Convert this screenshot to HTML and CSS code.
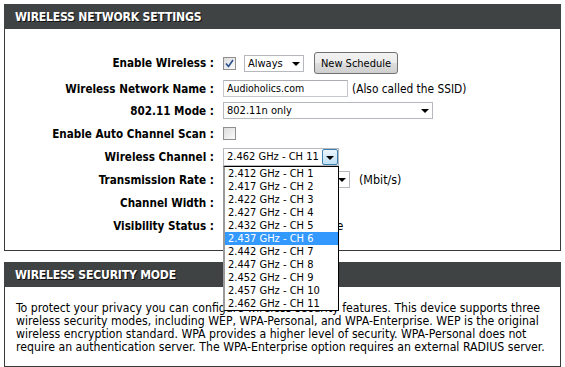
FILE: index.html
```html
<!DOCTYPE html>
<html lang="en">
<head>
    <meta charset="UTF-8">
    <title>Wireless Settings</title>
    <link rel="stylesheet" href="styles.css">
</head>
<body>
    <div class="page">
        <div class="box">
            <h2 class="box-title">WIRELESS NETWORK SETTINGS</h2>
            <div class="box-body settings">
                <div class="row row-first">
                    <span class="lbl">Enable Wireless :</span>
                    <div class="field">
                        <span class="check checked">
                            <svg width="9" height="9" viewBox="0 0 9 9"><path d="M1 4.5 L3.5 7.5 L8 1" fill="none" stroke="#2a4f8f" stroke-width="1.6"/></svg>
                        </span>
                        <div class="select sel-always"><span class="sel-text">Always</span><span class="arrow"></span></div>
                        <button class="btn">New Schedule</button>
                    </div>
                </div>
                <div class="row row-second">
                    <span class="lbl">Wireless Network Name :</span>
                    <div class="field">
                        <div class="input ssid">Audioholics.com</div>
                        <span class="note">(Also called the SSID)</span>
                    </div>
                </div>
                <div class="row">
                    <span class="lbl">802.11 Mode :</span>
                    <div class="field">
                        <div class="select sel-mode"><span class="sel-text">802.11n only</span><span class="arrow"></span></div>
                    </div>
                </div>
                <div class="row">
                    <span class="lbl">Enable Auto Channel Scan :</span>
                    <div class="field">
                        <span class="check"></span>
                    </div>
                </div>
                <div class="row">
                    <span class="lbl">Wireless Channel :</span>
                    <div class="field">
                        <div class="channel">
                            <div class="select sel-channel"><span class="sel-text">2.462 GHz - CH 11</span><span class="arrow"></span></div>
                            <ul class="dropdown">
                                <li>2.412 GHz - CH 1</li>
                                <li>2.417 GHz - CH 2</li>
                                <li>2.422 GHz - CH 3</li>
                                <li>2.427 GHz - CH 4</li>
                                <li>2.432 GHz - CH 5</li>
                                <li class="active">2.437 GHz - CH 6</li>
                                <li>2.442 GHz - CH 7</li>
                                <li>2.447 GHz - CH 8</li>
                                <li>2.452 GHz - CH 9</li>
                                <li>2.457 GHz - CH 10</li>
                                <li>2.462 GHz - CH 11</li>
                            </ul>
                        </div>
                    </div>
                </div>
                <div class="row">
                    <span class="lbl">Transmission Rate :</span>
                    <div class="field">
                        <div class="select sel-rate"><span class="sel-text">Best (automatic)</span><span class="arrow"></span></div>
                        <span class="note note-rate">(Mbit/s)</span>
                    </div>
                </div>
                <div class="row">
                    <span class="lbl">Channel Width :</span>
                    <div class="field">
                        <div class="select sel-width"><span class="sel-text">20 MHz</span><span class="arrow"></span></div>
                    </div>
                </div>
                <div class="row">
                    <span class="lbl">Visibility Status :</span>
                    <div class="field">
                        <span class="radio on"></span><span class="opt">Visible</span>
                        <span class="radio"></span><span class="opt">Invisible</span>
                    </div>
                </div>
            </div>
        </div>

        <div class="box">
            <h2 class="box-title">WIRELESS SECURITY MODE</h2>
            <div class="box-body">
                <p class="desc">To protect your privacy you can configure wireless security features. This device supports three<br>
                wireless security modes, including WEP, WPA-Personal, and WPA-Enterprise. WEP is the original<br>
                wireless encryption standard. WPA provides a higher level of security. WPA-Personal does not<br>
                require an authentication server. The WPA-Enterprise option requires an external RADIUS server.</p>
            </div>
        </div>
    </div>
</body>
</html>
```

FILE: styles.css
```css
:root {
    --head-bg: #404343;
    --border: #3a3a3a;
    --ctrl-border: #b5b8bd;
    --text: #000;
}

* {
    margin: 0;
    padding: 0;
    box-sizing: border-box;
}

body {
    font-family: 'DejaVu Sans Condensed', 'DejaVu Sans', sans-serif;
    font-size: 12px;
    color: var(--text);
    background: #fff;
}

.page {
    padding: 4px 4px 0 4px;
}

.box {
    border: 1px solid var(--border);
    border-top: none;
    margin-bottom: 11px;
}

.box-title {
    background: var(--head-bg);
    color: #fff;
    font-family: 'DejaVu Sans Condensed', 'DejaVu Sans', sans-serif;
    font-size: 12.1px;
    font-weight: 700;
    letter-spacing: -0.2px;
    height: 25px;
    line-height: 26px;
    padding-left: 11px;
    margin: 0 -1px;
    text-shadow: 1px 1px 0 #111;
}

/* settings rows */
.settings {
    padding: 20px 0 13px 0;
}

.row {
    display: flex;
    align-items: center;
    height: 23px;
}

.row-first {
    height: 28px;
}

.row-second {
    height: 21px;
    margin-top: 1px;
}

.lbl {
    width: 209px;
    text-align: right;
    font-weight: 700;
    font-size: 11.6px;
    white-space: nowrap;
}

.field {
    display: flex;
    align-items: center;
    margin-left: 9px;
    white-space: nowrap;
    font-size: 11px;
}

.check {
    display: inline-flex;
    align-items: center;
    justify-content: center;
    width: 13px;
    height: 13px;
    border: 1px solid #8f8f8f;
    background: linear-gradient(135deg, #dcdcdc, #fbfbfb);
}

.check svg {
    display: block;
}

.select {
    display: flex;
    align-items: center;
    height: 17px;
    border: 1px solid var(--ctrl-border);
    background: #fff;
}

.sel-text {
    flex: 1;
    padding-left: 3px;
    font-size: 11px;
    line-height: 15px;
}

.arrow {
    width: 15px;
    height: 15px;
    position: relative;
}

.arrow::after {
    content: '';
    position: absolute;
    left: 4px;
    top: 6px;
    border-left: 4px solid transparent;
    border-right: 4px solid transparent;
    border-top: 4px solid #000;
}

.sel-always {
    width: 60px;
    margin-left: 8px;
}

.btn {
    margin-left: 10px;
    width: 84px;
    height: 22px;
    border: 1px solid #707070;
    border-radius: 3px;
    background: linear-gradient(#f2f2f2, #ebebeb 50%, #dddddd 50%, #cfcfcf);
    font-family: 'DejaVu Sans Condensed', 'DejaVu Sans', sans-serif;
    font-size: 11px;
    color: #000;
}

.input {
    height: 17px;
    border: 1px solid #c5c8cc;
    border-top-color: #abadb3;
    padding-left: 3px;
    line-height: 15px;
    font-size: 10.5px;
}

.ssid {
    width: 125px;
}

.note {
    margin-left: 4px;
    font-size: 11.8px;
}

.note-rate {
    margin-left: 9px;
    font-size: 12.4px;
}

.sel-mode {
    width: 210px;
}

.channel {
    position: relative;
}

.sel-channel {
    width: 116px;
    height: 18px;
}

.sel-channel .arrow {
    width: 16px;
    height: 16px;
    background: linear-gradient(#eaf5fd, #bfe0f6);
    border: 1px solid #3c7fb1;
    border-radius: 2px;
}

.sel-channel .arrow::after {
    left: 3px;
    top: 6px;
}

.dropdown {
    position: absolute;
    top: 18px;
    left: 0;
    width: 116px;
    list-style: none;
    background: #fff;
    border: 1px solid #000;
    border-left: 2px solid #9a9a9a;
    z-index: 5;
}

.dropdown li {
    height: 13px;
    line-height: 13px;
    padding-left: 3px;
    font-size: 11px;
}

.dropdown li.active {
    background: #3399ff;
    color: #fff;
}

.sel-rate {
    width: 127px;
}

.sel-width {
    width: 80px;
}

.radio {
    display: inline-block;
    width: 13px;
    height: 13px;
    border: 1px solid #8f8f8f;
    border-radius: 50%;
    margin-right: 3px;
}

.opt {
    margin-right: 6px;
    font-size: 12.4px;
}

/* description */
.desc {
    padding: 15px 0 12px 11px;
    font-size: 12.2px;
    line-height: 13px;
    white-space: nowrap;
}
```
